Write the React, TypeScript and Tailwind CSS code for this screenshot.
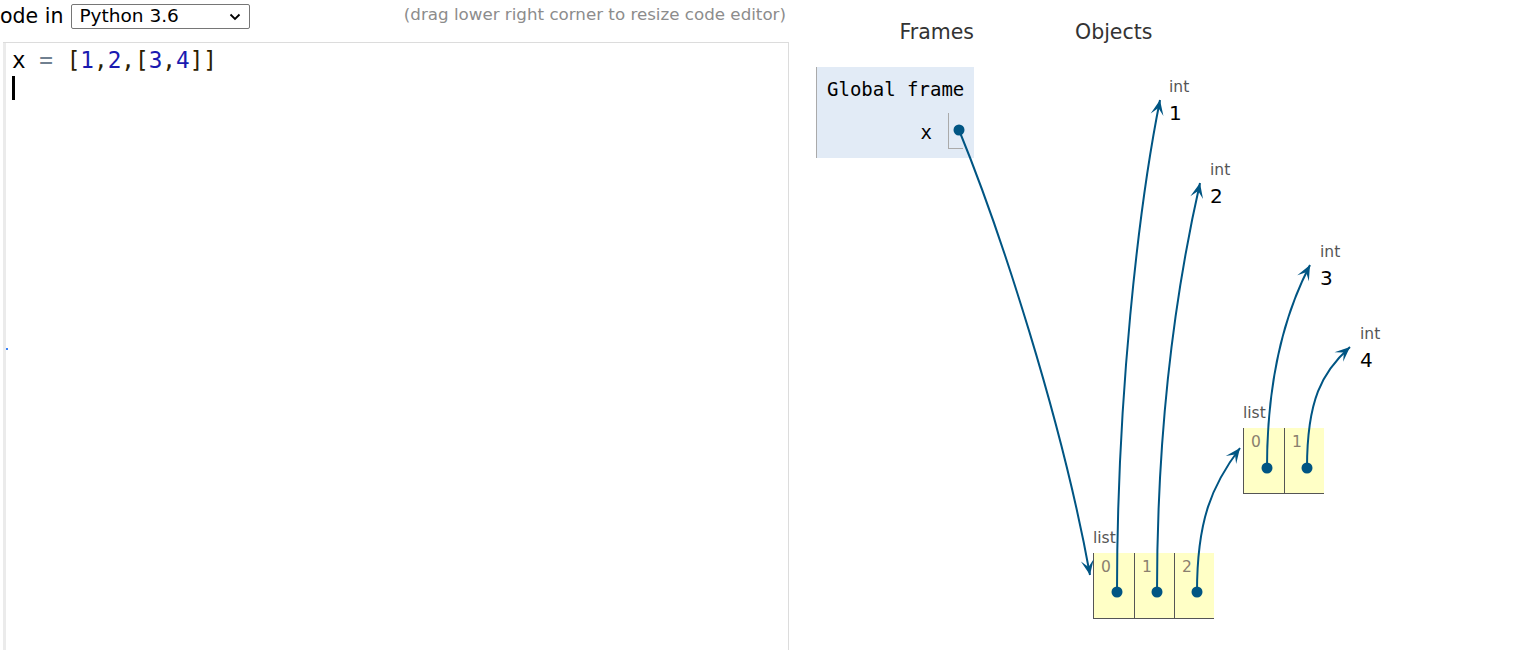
import React from "react";

type Pt = [number, number];
type Curve = { p0: Pt; p1: Pt; p2: Pt; p3: Pt };

const arrows: Curve[] = [
  { p0: [959, 130], p1: [1000, 230], p2: [1062, 420], p3: [1090, 575] },
  { p0: [1117, 592], p1: [1117, 400], p2: [1138, 210], p3: [1160, 100] },
  { p0: [1157, 592], p1: [1157, 420], p2: [1178, 280], p3: [1200, 183] },
  { p0: [1197, 592], p1: [1197, 520], p2: [1212, 485], p3: [1240, 448] },
  { p0: [1267, 468], p1: [1267, 380], p2: [1284, 315], p3: [1310, 265] },
  { p0: [1307, 468], p1: [1307, 400], p2: [1322, 372], p3: [1350, 347] },
];

const head = (c: Curve) => {
  const [tx, ty] = c.p3;
  let dx = c.p3[0] - c.p2[0];
  let dy = c.p3[1] - c.p2[1];
  const len = Math.hypot(dx, dy) || 1;
  dx /= len;
  dy /= len;
  const nx = -dy;
  const ny = dx;
  const L = 15;
  const W = 13;
  const bx = tx - dx * L;
  const by = ty - dy * L;
  const kx = tx - dx * L * 0.55;
  const ky = ty - dy * L * 0.55;
  return `${tx},${ty} ${bx + (nx * W) / 2},${by + (ny * W) / 2} ${kx},${ky} ${bx - (nx * W) / 2},${by - (ny * W) / 2}`;
};

const IntObj = ({ value, pos }: { value: string; pos: string }) => (
  <div className={`absolute ${pos} flex flex-col leading-none`}>
    <span className="text-[15.5px] text-[#555]">int</span>
    <span className="mt-[7px] text-[20px] text-black">{value}</span>
  </div>
);

const ListObj = ({ items, pos }: { items: number; pos: string }) => (
  <div className={`absolute ${pos} flex flex-col`}>
    <span className="text-[15.5px] leading-none text-[#555] mb-[6px]">list</span>
    <div className="flex border-b border-l border-[#555] bg-[#ffffc6]">
      {Array.from({ length: items }).map((_, i) => (
        <div
          key={i}
          className={`w-[40px] h-[65px] pl-[7px] pt-[7px] text-[15.5px] leading-none text-[#8a7f6f] ${i > 0 ? "border-l border-[#555]" : ""}`}
        >
          {i}
        </div>
      ))}
    </div>
  </div>
);

export default function App() {
  return (
    <div className="w-[1528px] h-[650px] bg-white flex overflow-hidden font-['DejaVu_Sans',sans-serif]">
      <div className="w-[789px] h-full flex flex-col shrink-0">
        <div className="h-[42px] flex items-start pt-[4px]">
          <span className="text-[20.5px] leading-[25px] text-black">ode in</span>
          <div className="ml-[8px] w-[179px] h-[25px] border border-[#767676] rounded-[2px] flex items-center justify-between pl-[7px] pr-[8px]">
            <span className="text-[18.5px] text-black leading-none">Python 3.6</span>
            <svg width="12" height="8" viewBox="0 0 12 8">
              <path d="M1.5 1.5 L6 6 L10.5 1.5" fill="none" stroke="#000" strokeWidth="1.8" />
            </svg>
          </div>
          <span className="ml-auto mr-[3px] text-[16.7px] leading-[20px] text-[#8c8c8c]">
            (drag lower right corner to resize code editor)
          </span>
        </div>
        <div className="relative flex-1 flex ml-[3px] border-t border-r border-[#dcdcdc]">
          <div className="w-[3px] h-full bg-[#ebebeb]" />
          <div className="pl-[6px] pt-[4px] font-['DejaVu_Sans_Mono',monospace] text-[22.7px] leading-[26px]">
            <div>
              <span className="text-black">x</span>
              <span className="text-[#708090]"> = </span>
              <span className="text-[#2b2000]">[</span>
              <span className="text-[#1a1ab0]">1</span>
              <span className="text-[#2b2000]">,</span>
              <span className="text-[#1a1ab0]">2</span>
              <span className="text-[#2b2000]">,[</span>
              <span className="text-[#1a1ab0]">3</span>
              <span className="text-[#2b2000]">,</span>
              <span className="text-[#1a1ab0]">4</span>
              <span className="text-[#2b2000]">]]</span>
            </div>
            <div className="mt-[3px] w-[3px] h-[24px] bg-black" />
          </div>
          <div className="absolute left-[3px] top-[305px] w-[2px] h-[2px] bg-[#3b82f6]" />
        </div>
      </div>

      <div className="relative flex-1 h-full">
        <div className="flex pt-[20px]">
          <div className="ml-[27px] w-[158px] flex flex-col">
            <div className="text-right text-[20.5px] leading-[24px] text-[#333]">Frames</div>
            <div className="mt-[23px] h-[91px] bg-[#e2ebf6] border-l border-[#aaa] flex flex-col">
              <div className="pl-[10px] pt-[12px] font-['DejaVu_Sans_Mono',monospace] text-[19px] leading-[20px] text-black">
                Global frame
              </div>
              <div className="flex justify-end items-center mt-[14px] pr-[11px]">
                <span className="font-['DejaVu_Sans_Mono',monospace] text-[19px] text-black mr-[16px] mt-[2px]">x</span>
                <div className="w-[15px] h-[36px] border-l border-b border-[#aaa]" />
              </div>
            </div>
          </div>
          <div className="ml-[101px] text-[20.5px] leading-[24px] text-[#333]">Objects</div>
        </div>

        <IntObj value="1" pos="left-[380px] top-[80px]" />
        <IntObj value="2" pos="left-[421px] top-[163px]" />
        <IntObj value="3" pos="left-[531px] top-[245px]" />
        <IntObj value="4" pos="left-[571px] top-[327px]" />

        <ListObj items={2} pos="left-[454px] top-[406px]" />
        <ListObj items={3} pos="left-[304px] top-[531px]" />

        <svg
          className="absolute inset-0 pointer-events-none"
          width="739"
          height="650"
          viewBox="789 0 739 650"
        >
          {arrows.map((c, i) => (
            <g key={i}>
              <path
                d={`M${c.p0[0]} ${c.p0[1]} C${c.p1[0]} ${c.p1[1]} ${c.p2[0]} ${c.p2[1]} ${c.p3[0]} ${c.p3[1]}`}
                fill="none"
                stroke="#005583"
                strokeWidth="2"
              />
              <polygon points={head(c)} fill="#005583" />
              <circle cx={c.p0[0]} cy={c.p0[1]} r="5.5" fill="#005583" />
            </g>
          ))}
        </svg>
      </div>
    </div>
  );
}
